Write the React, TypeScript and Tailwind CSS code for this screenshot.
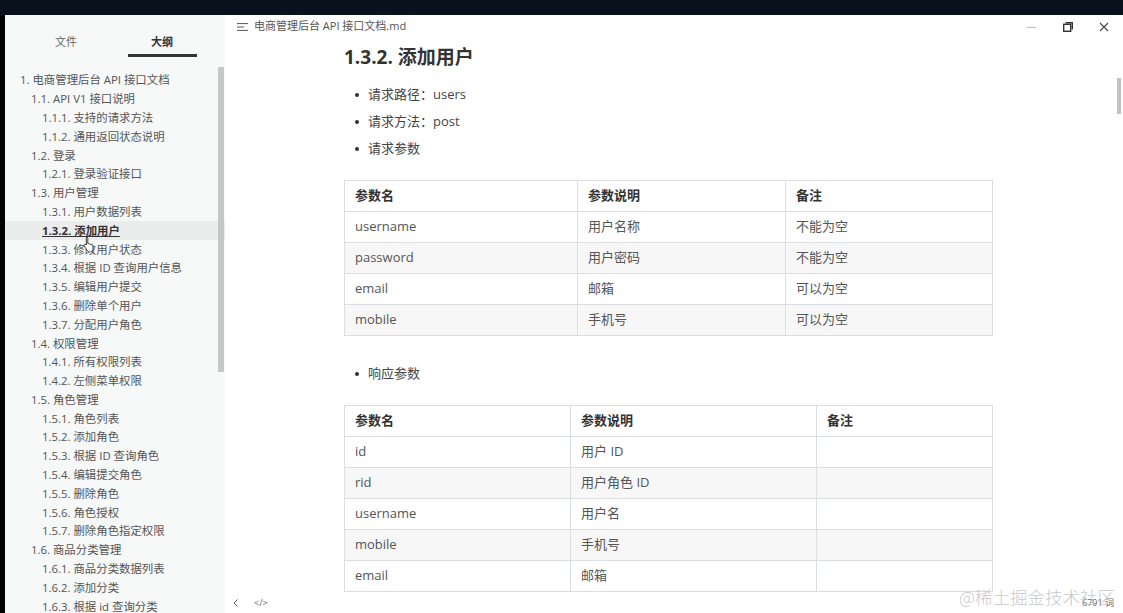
import React from "react";

const FONT = { fontFamily: '"Open Sans", "Noto Sans CJK SC", sans-serif' };

type Item = { level: 1 | 2 | 3; text: string; active?: boolean };

const outline: Item[] = [
  { level: 1, text: "1. 电商管理后台 API 接口文档" },
  { level: 2, text: "1.1. API V1 接口说明" },
  { level: 3, text: "1.1.1. 支持的请求方法" },
  { level: 3, text: "1.1.2. 通用返回状态说明" },
  { level: 2, text: "1.2. 登录" },
  { level: 3, text: "1.2.1. 登录验证接口" },
  { level: 2, text: "1.3. 用户管理" },
  { level: 3, text: "1.3.1. 用户数据列表" },
  { level: 3, text: "1.3.2. 添加用户", active: true },
  { level: 3, text: "1.3.3. 修改用户状态" },
  { level: 3, text: "1.3.4. 根据 ID 查询用户信息" },
  { level: 3, text: "1.3.5. 编辑用户提交" },
  { level: 3, text: "1.3.6. 删除单个用户" },
  { level: 3, text: "1.3.7. 分配用户角色" },
  { level: 2, text: "1.4. 权限管理" },
  { level: 3, text: "1.4.1. 所有权限列表" },
  { level: 3, text: "1.4.2. 左侧菜单权限" },
  { level: 2, text: "1.5. 角色管理" },
  { level: 3, text: "1.5.1. 角色列表" },
  { level: 3, text: "1.5.2. 添加角色" },
  { level: 3, text: "1.5.3. 根据 ID 查询角色" },
  { level: 3, text: "1.5.4. 编辑提交角色" },
  { level: 3, text: "1.5.5. 删除角色" },
  { level: 3, text: "1.5.6. 角色授权" },
  { level: 3, text: "1.5.7. 删除角色指定权限" },
  { level: 2, text: "1.6. 商品分类管理" },
  { level: 3, text: "1.6.1. 商品分类数据列表" },
  { level: 3, text: "1.6.2. 添加分类" },
  { level: 3, text: "1.6.3. 根据 id 查询分类" },
];

const requestRows = [
  ["username", "用户名称", "不能为空"],
  ["password", "用户密码", "不能为空"],
  ["email", "邮箱", "可以为空"],
  ["mobile", "手机号", "可以为空"],
];

const responseRows = [
  ["id", "用户 ID", ""],
  ["rid", "用户角色 ID", ""],
  ["username", "用户名", ""],
  ["mobile", "手机号", ""],
  ["email", "邮箱", ""],
];

function Sidebar() {
  return (
    <aside className="relative flex w-[220px] flex-col bg-[#f7f8f8]">
      <div className="flex h-[46px] px-[13px] pt-[19px]">
        <div className="flex w-[96px] justify-center text-[11px] text-[#666]">文件</div>
        <div className="flex w-[96px] flex-col items-center text-[11px] font-bold text-[#333]">
          <span>大纲</span>
          <div className="mt-[3px] h-[3px] w-[69px] bg-[#333]" />
        </div>
      </div>
      <div className="pt-[14px]">
        {outline.map((item) => (
          <div
            key={item.text}
            className={
              "flex h-[18.8px] items-center text-[11.4px] whitespace-nowrap " +
              (item.active ? "bg-[#ebeded] font-bold text-[#333] underline" : "text-[#555]") +
              (item.level === 1 ? " pl-[15px]" : item.level === 2 ? " pl-[26px]" : " pl-[37px]")
            }
          >
            {item.text}
          </div>
        ))}
      </div>
      <div className="absolute right-[1px] top-[52px] h-[305px] w-[6px] bg-[#c6c8c8]" />
      {/* pointer cursor over the active item */}
      <svg className="absolute left-[78px] top-[221px]" width="13" height="16" viewBox="0 0 13 16">
        <path
          d="M3.5 1.2c.8 0 1.3.6 1.3 1.3v5l.5-.1c.6-.1 1.2.3 1.3.8l.4-.1c.6-.1 1.2.3 1.3.8l.4-.1c.7-.1 1.3.4 1.3 1.1v3.2c0 1.6-1.2 2.9-2.8 2.9H6.6c-.9 0-1.7-.4-2.2-1.1L1.2 10c-.4-.6-.2-1.3.4-1.6.5-.3 1.1-.1 1.4.3l.3.4V2.5c0-.7.5-1.3 1.2-1.3z"
          fill="#fff"
          stroke="#222"
          strokeWidth="0.9"
        />
      </svg>
    </aside>
  );
}

function DocTable({ rows, widths }: { rows: string[][]; widths: number[] }) {
  return (
    <table className="w-[648px] table-fixed border-collapse text-[13px]">
      <colgroup>
        {widths.map((w, i) => (
          <col key={i} style={{ width: w }} />
        ))}
      </colgroup>
      <thead>
        <tr className="h-[31px] bg-white">
          {["参数名", "参数说明", "备注"].map((h) => (
            <th key={h} className="border border-[#dcdfe2] px-[10px] text-left font-bold text-[#333]">
              {h}
            </th>
          ))}
        </tr>
      </thead>
      <tbody>
        {rows.map((r, i) => (
          <tr key={r[0]} className={"h-[31px] " + (i % 2 === 1 ? "bg-[#f7f7f7]" : "bg-white")}>
            {r.map((c, j) => (
              <td key={j} className="border border-[#dcdfe2] px-[10px] text-[#555]">
                {c}
              </td>
            ))}
          </tr>
        ))}
      </tbody>
    </table>
  );
}

function Bullet({ children }: { children: React.ReactNode }) {
  return (
    <li className="flex h-[27px] items-center text-[13px] text-[#444]">
      <span className="ml-[11px] mr-[9px] h-[4px] w-[4px] rounded-full bg-[#333]" />
      {children}
    </li>
  );
}

function Main() {
  return (
    <main className="relative flex min-w-0 flex-1 flex-col bg-white">
      <div className="flex h-[23px] items-center pl-[12px]">
        <svg width="11" height="8" viewBox="0 0 11 8" className="mr-[6px]">
          <path d="M0 0.6h11M0 4h7M0 7.4h11" stroke="#555" strokeWidth="1" />
        </svg>
        <span className="text-[11px] text-[#555]">电商管理后台 API 接口文档.md</span>
        <div className="ml-auto flex items-center">
          <svg width="10" height="10" viewBox="0 0 10 10" className="mr-[26px]">
            <path d="M0 5.5h9" stroke="#bbb" strokeWidth="1" />
          </svg>
          <svg width="10" height="10" viewBox="0 0 10 10" className="mr-[26px]">
            <rect x="0.7" y="2.3" width="7" height="7" fill="none" stroke="#333" strokeWidth="1.4" />
            <path d="M2.5 0.7h6.8v6.8" fill="none" stroke="#333" strokeWidth="1.4" />
          </svg>
          <svg width="10" height="10" viewBox="0 0 10 10" className="mr-[14px]">
            <path d="M1 1l8 8M9 1l-8 8" stroke="#444" strokeWidth="1.1" />
          </svg>
        </div>
      </div>

      <div className="min-h-0 flex-1 overflow-hidden pl-[119px]">
        <h2 className="mt-[5px] h-[28px] text-[19px] font-bold leading-[28px] text-[#333]">
          1.3.2. 添加用户
        </h2>
        <ul className="mt-[10px]">
          <Bullet>请求路径：users</Bullet>
          <Bullet>请求方法：post</Bullet>
          <Bullet>请求参数</Bullet>
        </ul>
        <div className="mt-[18px]">
          <DocTable rows={requestRows} widths={[233, 208, 207]} />
        </div>
        <ul className="mt-[24px]">
          <Bullet>响应参数</Bullet>
        </ul>
        <div className="mt-[18px]">
          <DocTable rows={responseRows} widths={[226, 246, 176]} />
        </div>
      </div>

      <div className="flex h-[20px] items-center bg-white pl-[6px] text-[#666]">
        <svg width="8" height="10" viewBox="0 0 8 10" className="ml-[1px]">
          <path d="M5.5 1.5L2 5l3.5 3.5" fill="none" stroke="#666" strokeWidth="1" />
        </svg>
        <span className="ml-[14px] text-[9px] text-[#666]">&lt;/&gt;</span>
        <span className="ml-auto mr-[9px] text-[9px] text-[#666]">6791 词</span>
      </div>

      <div className="absolute right-[2px] top-[63px] h-[36px] w-[4px] bg-[#c1c1c1]" />
      <div
        className="pointer-events-none absolute bottom-[8px] right-[8px] text-[17.5px] leading-none text-[#b9b9b9]/80"
        style={{ fontFamily: '"Noto Sans CJK SC", sans-serif', fontWeight: 300 }}
      >
        @稀土掘金技术社区
      </div>
    </main>
  );
}

export default function App() {
  return (
    <div className="flex h-[613px] w-[1123px] flex-col overflow-hidden bg-[#08121c]" style={FONT}>
      <div className="h-[15px] shrink-0" />
      <div className="flex min-h-0 flex-1">
        <div className="w-[5px] bg-black" />
        <Sidebar />
        <Main />
      </div>
    </div>
  );
}
